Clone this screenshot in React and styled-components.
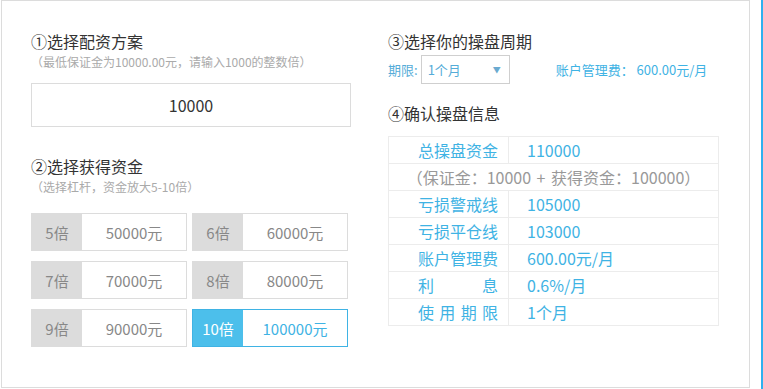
import React from "react";
import styled, { createGlobalStyle } from "styled-components";

const Global = createGlobalStyle`
  html, body { margin: 0; padding: 0; background: #fff; }
  body {
    font-family: "Noto Sans CJK SC", "Noto Sans", sans-serif;
  }
  * { box-sizing: border-box; text-spacing-trim: space-all; }
`;

const BLUE = "#3fb3e4";

const Page = styled.div`
  display: flex;
  align-items: flex-start;
  width: 763px;
  height: 389px;
  overflow: hidden;
`;

const Panel = styled.div`
  margin-left: 1px;
  width: 749px;
  height: 388px;
  border: 1px solid #dcdcdc;
  display: flex;
  padding: 30px 0 0 29px;
  gap: 37px;
`;

const SideBar = styled.div`
  margin-left: 11px;
  width: 2px;
  height: 389px;
  background: #2fb0ef;
`;

const Column = styled.div`
  width: ${(p) => p.$w}px;
  display: flex;
  flex-direction: column;
`;

const Title = styled.div`
  font-size: 16px;
  line-height: 20px;
  color: #333;
  margin-top: ${(p) => p.$mt || 0}px;
`;

const Hint = styled.div`
  font-size: 12px;
  line-height: 20px;
  color: #aaa;
  margin-top: 1px;
`;

const Paren = styled.span`
  display: inline-block;
  width: 1em;
  text-align: center;
`;

const AmountBox = styled.div`
  margin-top: 11px;
  width: 320px;
  height: 44px;
  border: 1px solid #dcdcdc;
  display: flex;
  align-items: center;
  justify-content: center;
  font-size: 16px;
  color: #333;
`;

const Grid = styled.div`
  margin-top: 16px;
  display: grid;
  grid-template-columns: 156px 156px;
  grid-auto-rows: 38px;
  column-gap: 5px;
  row-gap: 10px;
`;

const Lever = styled.div`
  display: flex;
  border: 1px solid ${(p) => (p.$active ? BLUE : "#dcdcdc")};
  background: #fff;
  cursor: pointer;
`;

const LeverTag = styled.div`
  width: 50px;
  display: flex;
  align-items: center;
  justify-content: center;
  font-size: 15px;
  background: ${(p) => (p.$active ? "#4cbfeb" : "#dcdcdc")};
  color: ${(p) => (p.$active ? "#fff" : "#888")};
`;

const LeverValue = styled.div`
  flex: 1;
  display: flex;
  align-items: center;
  justify-content: center;
  font-size: 15px;
  color: ${(p) => (p.$active ? BLUE : "#888")};
`;

const PeriodRow = styled.div`
  margin-top: 4px;
  height: 29px;
  display: flex;
  align-items: center;
  font-size: 13px;
  color: #55acd8;
`;

const SelectBox = styled.div`
  margin-left: 3px;
  width: 89px;
  height: 29px;
  border: 1px solid #cfcfcf;
  display: flex;
  align-items: center;
  justify-content: space-between;
  padding: 0 8px 0 6px;
  font-size: 13px;
  color: #55acd8;
`;

const Caret = styled.span`
  font-size: 8px;
  color: #6aaad0;
`;

const Fee = styled.span`
  margin-left: 46px;
  color: ${BLUE};
`;

const Table = styled.div`
  margin-top: 13px;
  width: 331px;
  border-top: 1px solid #ececec;
  border-left: 1px solid #ececec;
  display: grid;
  grid-template-columns: 120px 1fr;
  grid-auto-rows: 27px;
`;

const Cell = styled.div`
  border-right: 1px solid #ececec;
  border-bottom: 1px solid #ececec;
  display: flex;
  align-items: center;
  font-size: 16px;
  white-space: pre;
  ${(p) =>
    p.$span
      ? `grid-column: 1 / span 2; justify-content: center; color: #999; word-spacing: 2px;`
      : p.$label
      ? `justify-content: flex-end; padding-right: 10px; color: ${BLUE};`
      : `padding-left: 18px; color: ${BLUE};`}
`;

const Justified = styled.span`
  display: inline-block;
  width: 80px;
  text-align: justify;
  text-align-last: justify;
`;

const levers = [
  [5, "50000元"],
  [6, "60000元"],
  [7, "70000元"],
  [8, "80000元"],
  [9, "90000元"],
  [10, "100000元"],
];

const rows = [
  ["总操盘资金", "110000"],
  null,
  ["亏损警戒线", "105000"],
  ["亏损平仓线", "103000"],
  ["账户管理费", "600.00元/月"],
  ["利息", "0.6%/月"],
  ["使用期限", "1个月"],
];

export default function App() {
  return (
    <>
      <Global />
      <Page>
        <Panel>
          <Column $w={320}>
            <Title>①选择配资方案</Title>
            <Hint>
              <Paren>（</Paren>最低保证金为10000.00元，请输入1000的整数倍<Paren>）</Paren>
            </Hint>
            <AmountBox>10000</AmountBox>
            <Title $mt={29}>②选择获得资金</Title>
            <Hint>
              <Paren>（</Paren>选择杠杆，资金放大5-10倍<Paren>）</Paren>
            </Hint>
            <Grid>
              {levers.map(([n, v]) => {
                const active = n === 10;
                return (
                  <Lever key={n} $active={active}>
                    <LeverTag $active={active}>{n}倍</LeverTag>
                    <LeverValue $active={active}>{v}</LeverValue>
                  </Lever>
                );
              })}
            </Grid>
          </Column>
          <Column $w={331}>
            <Title>③选择你的操盘周期</Title>
            <PeriodRow>
              <span>期限:</span>
              <SelectBox>
                <span>1个月</span>
                <Caret>▼</Caret>
              </SelectBox>
              <Fee>账户管理费： 600.00元/月</Fee>
            </PeriodRow>
            <Title $mt={19}>④确认操盘信息</Title>
            <Table>
              {rows.map((r, i) =>
                r === null ? (
                  <Cell key={i} $span>
                    <Paren>（</Paren>
                    {"保证金：10000 + 获得资金：100000"}
                    <Paren>）</Paren>
                  </Cell>
                ) : (
                  <React.Fragment key={i}>
                    <Cell $label>
                      <Justified>{r[0]}</Justified>
                    </Cell>
                    <Cell>{r[1]}</Cell>
                  </React.Fragment>
                )
              )}
            </Table>
          </Column>
        </Panel>
        <SideBar />
      </Page>
    </>
  );
}
